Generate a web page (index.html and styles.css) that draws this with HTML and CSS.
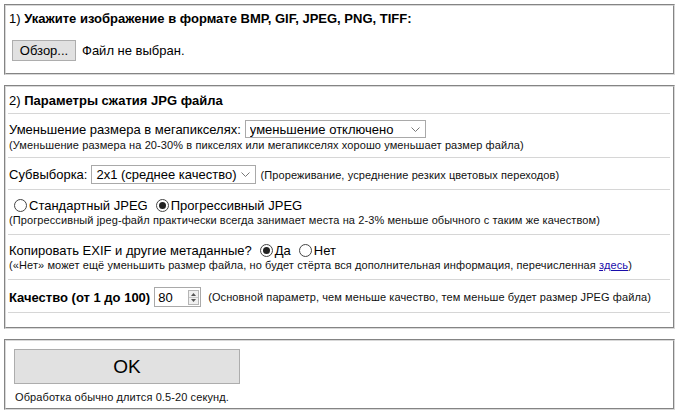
FILE: index.html
```html
<!DOCTYPE html>
<html lang="ru">
<head>
  <meta charset="UTF-8">
  <title>Сжатие JPG</title>
  <link rel="stylesheet" href="styles.css">
</head>
<body>
  <form class="converter">
    <div class="panel panel-upload">
      <div class="panel-title">1) <b>Укажите изображение в формате BMP, GIF, JPEG, PNG, TIFF:</b></div>
      <div class="file-row">
        <span class="btn-browse">Обзор...</span>
        <span class="file-name">Файл не выбран.</span>
      </div>
    </div>

    <div class="panel panel-options">
      <div class="row row-title">2) <b>Параметры сжатия JPG файла</b></div>

      <div class="row row-resize">
        <div class="line">
          Уменьшение размера в мегапикселях:
          <span class="select-wrap select-resize">
            <select>
              <option>уменьшение отключено</option>
            </select>
            <svg class="chevron" width="9" height="5" viewBox="0 0 9 5"><path d="M0.5 0.5 L4.5 4.5 L8.5 0.5" fill="none" stroke="#777" stroke-width="1"/></svg>
          </span>
        </div>
        <div class="note">(Уменьшение размера на 20-30% в пикселях или мегапикселях хорошо уменьшает размер файла)</div>
      </div>

      <div class="row row-sampling">
        <div class="line">
          Субвыборка:
          <span class="select-wrap select-sampling">
            <select>
              <option>2x1 (среднее качество)</option>
            </select>
            <svg class="chevron" width="9" height="5" viewBox="0 0 9 5"><path d="M0.5 0.5 L4.5 4.5 L8.5 0.5" fill="none" stroke="#777" stroke-width="1"/></svg>
          </span>
          <span class="note">(Прореживание, усреднение резких цветовых переходов)</span>
        </div>
      </div>

      <div class="row row-progressive">
        <div class="line">
          <label class="radio"><input type="radio" name="progressive">Стандартный JPEG</label>
          <label class="radio"><input type="radio" name="progressive" checked>Прогрессивный JPEG</label>
        </div>
        <div class="note">(Прогрессивный jpeg-файл практически всегда занимает места на 2-3% меньше обычного с таким же качеством)</div>
      </div>

      <div class="row row-exif">
        <div class="line">
          Копировать EXIF и другие метаданные?
          <label class="radio"><input type="radio" name="exif" checked>Да</label>
          <label class="radio"><input type="radio" name="exif">Нет</label>
        </div>
        <div class="note">(«Нет» может ещё уменьшить размер файла, но будет стёрта вся дополнительная информация, перечисленная <a href="#">здесь</a>)</div>
      </div>

      <div class="row row-quality">
        <div class="line">
          <b class="quality-label">Качество (от 1 до 100)</b>
          <span class="spin">
            <input type="text" value="80">
            <span class="spin-buttons">
              <svg width="11" height="15" viewBox="0 0 11 15">
                <rect x="0.5" y="0.5" width="10" height="14" fill="#f0f0f0" stroke="#b5b5b5"/>
                <line x1="1" y1="7.5" x2="10" y2="7.5" stroke="#c8c8c8"/>
                <path d="M3 6 L5.5 3 L8 6 Z" fill="#555"/>
                <path d="M3 9 L5.5 12 L8 9 Z" fill="#555"/>
              </svg>
            </span>
          </span>
          <span class="note">(Основной параметр, чем меньше качество, тем меньше будет размер JPEG файла)</span>
        </div>
      </div>
    </div>

    <div class="panel panel-submit">
      <button type="button" class="btn-ok">OK</button>
      <div class="note">Обработка обычно длится 0.5-20 секунд.</div>
    </div>
  </form>
</body>
</html>
```

FILE: styles.css
```css
body {
  margin: 0;
  padding: 4px 5px 4px 4px;
  background: #fff;
  color: #000;
  font-family: "Liberation Sans", Arial, sans-serif;
  font-size: 13px;
}

.panel {
  border: 2px groove #d8d8d8;
  padding: 0 3px 0 2px;
  margin-bottom: 10px;
}

.panel-title {
  padding: 3px 1px 0;
  height: 19px;
  line-height: 19px;
}

.file-row {
  display: flex;
  align-items: center;
  gap: 6px;
  padding: 12px 0 12px 4px;
}

.btn-browse {
  display: inline-block;
  width: 62px;
  height: 19px;
  line-height: 19px;
  text-align: center;
  background: #e1e1e1;
  border: 1px solid #adadad;
  font-size: 13px;
}

.row {
  border-bottom: 1px solid #d6d6d6;
  padding: 0 1px;
}

.line {
  display: flex;
  align-items: center;
  gap: 4px;
}

.note {
  font-size: 11px;
  letter-spacing: 0.1px;
  color: #111;
}

.row-title {
  height: 26px;
  line-height: 27px;
}

.row-resize {
  padding-top: 6px;
  height: 37px;
}

.row-resize .note {
  margin-top: 1px;
}

.row-sampling {
  padding-top: 7px;
  height: 24px;
}

.row-progressive {
  padding-top: 8px;
  height: 36px;
}

.row-exif {
  padding-top: 8px;
  height: 36px;
}

.row-exif .note,
.row-progressive .note {
  margin-top: 1px;
}

.row-quality {
  padding-top: 7px;
  height: 25px;
  margin-bottom: 14px;
}

.select-wrap {
  position: relative;
  display: inline-block;
}

.select-wrap select {
  appearance: none;
  -webkit-appearance: none;
  border: 1px solid #a9a9a9;
  border-radius: 0;
  background: #fff;
  font-family: "Liberation Sans", Arial, sans-serif;
  font-size: 13px;
  color: #000;
  height: 18px;
  padding: 0 0 0 4px;
  margin: 0;
}

.select-resize select {
  width: 181px;
}

.select-sampling select {
  width: 165px;
  height: 19px;
}

.chevron {
  position: absolute;
  right: 6px;
  top: 7px;
  pointer-events: none;
}

.radio {
  display: inline-flex;
  align-items: center;
  margin-right: 2px;
}

.radio input {
  appearance: none;
  -webkit-appearance: none;
  width: 13px;
  height: 13px;
  margin: 0 2px 0 2px;
  border: 1px solid #444;
  border-radius: 50%;
  background: #fff;
  position: relative;
}

.radio input:checked::after {
  content: "";
  position: absolute;
  left: 2px;
  top: 2px;
  width: 7px;
  height: 7px;
  border-radius: 50%;
  background: #222;
}

.row-progressive .radio:first-child input {
  margin-left: 5px;
}

.row-exif .radio:first-of-type input {
  margin-left: 4px;
}

.quality-label {
  font-weight: bold;
}

.spin {
  display: inline-flex;
  align-items: center;
  border: 1px solid #a9a9a9;
  height: 18px;
  width: 45px;
  background: #fff;
  margin-right: 3px;
}

.spin input {
  border: none;
  outline: none;
  width: 28px;
  padding: 0 0 0 3px;
  font-family: "Liberation Sans", Arial, sans-serif;
  font-size: 13px;
}

.spin-buttons {
  display: flex;
  margin-left: 2px;
}

.note a {
  color: #1a0dab;
}

.panel-submit {
  padding: 8px 4px 5px 8px;
}

.btn-ok {
  width: 226px;
  height: 35px;
  background: #e1e1e1;
  border: 1px solid #adadad;
  font-family: "Liberation Sans", Arial, sans-serif;
  font-size: 19px;
  color: #000;
  padding: 0;
}

.panel-submit .note {
  margin-top: 7px;
  padding-left: 1px;
}
```
